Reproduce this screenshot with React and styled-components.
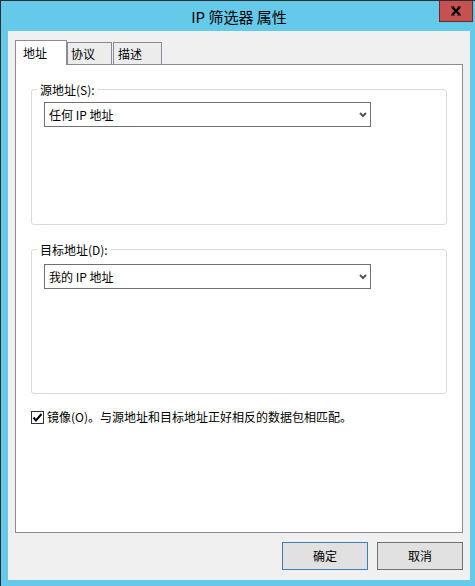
import React from "react";
import styled, { createGlobalStyle } from "styled-components";

const GlobalStyle = createGlobalStyle`
  html, body {
    margin: 0;
    padding: 0;
    overflow: hidden;
    background: #65c9e9;
  }
  body {
    font-family: "Noto Sans CJK SC", "Noto Sans", sans-serif;
    font-size: 12px;
    color: #000;
  }
`;

const Window = styled.div`
  width: 478px;
  height: 588px;
  box-sizing: border-box;
  border: 1px solid #2e2e2e;
  background: #65c9e9;
  display: flex;
  flex-direction: column;
`;

const TitleBar = styled.div`
  position: relative;
  flex: none;
  height: 30px;
  padding-top: 1px;
  box-sizing: border-box;
  display: flex;
  align-items: center;
  justify-content: center;
  font-size: 15px;
  line-height: 18px;
`;

const CloseButton = styled.div`
  position: absolute;
  top: 0;
  right: 4px;
  width: 34px;
  height: 21px;
  box-sizing: border-box;
  background: #c75050;
  border: 1px solid #5c2e2e;
  border-top: none;
  display: flex;
  align-items: center;
  justify-content: center;
`;

const Client = styled.div`
  flex: 1;
  margin: 0 7px 7px;
  padding: 9px 7px 10px;
  background: #f0f0f0;
  display: flex;
  flex-direction: column;
`;

const Tabs = styled.div`
  position: relative;
  z-index: 1;
  display: flex;
  align-items: flex-end;
  margin-bottom: -1px;
`;

const Tab = styled.div`
  box-sizing: border-box;
  width: ${({ $width }) => $width}px;
  height: ${({ $active }) => ($active ? 25 : 22)}px;
  margin-bottom: ${({ $active }) => ($active ? 0 : 1)}px;
  margin-left: ${({ $offset }) => $offset || 0}px;
  padding-left: ${({ $pad }) => $pad}px;
  border: 1px solid #898c95;
  border-bottom: none;
  background: ${({ $active }) => ($active ? "#fff" : "#ececec")};
  display: flex;
  align-items: center;
  line-height: 14px;
`;

const Panel = styled.div`
  flex: 1;
  box-sizing: border-box;
  border: 1px solid #898c95;
  background: #fff;
  padding: 17px 15px 0;
  display: flex;
  flex-direction: column;
`;

const GroupBox = styled.fieldset`
  margin: ${({ $top }) => $top || 0}px 0 0;
  padding: 0;
  min-width: 0;
  border: 1px solid #d5dbe1;
  border-radius: 3px;
`;

const Legend = styled.legend`
  margin-left: 5px;
  padding: 0 3px;
  line-height: 15px;
`;

const GroupBody = styled.div`
  box-sizing: border-box;
  height: ${({ $height }) => $height}px;
  padding: ${({ $top }) => $top}px 12px 0;
`;

const Combo = styled.div`
  box-sizing: border-box;
  width: 327px;
  height: 25px;
  border: 1px solid #707070;
  background: #fff;
  padding: 0 3px 0 4px;
  display: flex;
  align-items: center;
  justify-content: space-between;
  line-height: 14px;
`;

const CheckRow = styled.label`
  display: flex;
  align-items: center;
  gap: 3px;
  margin-top: 16px;
  line-height: 14px;
`;

const CheckBox = styled.span`
  width: 13px;
  height: 13px;
  box-sizing: border-box;
  border: 1px solid #333;
  background: #fff;
  display: flex;
  align-items: center;
  justify-content: center;
`;

const ButtonRow = styled.div`
  display: flex;
  justify-content: flex-end;
  gap: 9px;
  margin-top: 9px;
`;

const Button = styled.button`
  width: 86px;
  height: 28px;
  box-sizing: border-box;
  padding: 0;
  border: 1px solid ${({ $default }) => ($default ? "#3c7fb1" : "#707070")};
  background: #e1e1e1;
  font-family: inherit;
  font-size: 12px;
  line-height: 14px;
  color: #000;
`;

const Chevron = () => (
  <svg width="8" height="6" viewBox="0 0 8 6">
    <polyline points="1,1 4,4 7,1" fill="none" stroke="#555" strokeWidth="2" />
  </svg>
);

const Select = ({ value }) => (
  <Combo>
    <span>{value}</span>
    <Chevron />
  </Combo>
);

const App = () => {
  return (
    <>
      <GlobalStyle />
      <Window>
        <TitleBar>
          IP 筛选器 属性
          <CloseButton>
            <svg width="10" height="10" viewBox="0 0 10 10">
              <path d="M1.5 1.5 L8.5 8.5 M8.5 1.5 L1.5 8.5" stroke="#000" strokeWidth="2.4" />
              <path d="M0 1 H3.5 M6.5 1 H10 M0 9 H3.5 M6.5 9 H10" stroke="#000" strokeWidth="1.2" />
            </svg>
          </CloseButton>
        </TitleBar>
        <Client>
          <Tabs>
            <Tab $active $width={52} $pad={7}>地址</Tab>
            <Tab $width={45} $pad={3}>协议</Tab>
            <Tab $width={49} $offset={1} $pad={4}>描述</Tab>
          </Tabs>
          <Panel>
            <GroupBox>
              <Legend>源地址(S):</Legend>
              <GroupBody $height={127} $top={5}>
                <Select value="任何 IP 地址" />
              </GroupBody>
            </GroupBox>
            <GroupBox $top={17}>
              <Legend>目标地址(D):</Legend>
              <GroupBody $height={136} $top={7}>
                <Select value="我的 IP 地址" />
              </GroupBody>
            </GroupBox>
            <CheckRow>
              <CheckBox>
                <svg width="11" height="11" viewBox="0 0 11 11">
                  <polyline points="1.5,5.5 4,8.5 9.5,2" fill="none" stroke="#000" strokeWidth="2" />
                </svg>
              </CheckBox>
              镜像(O)。与源地址和目标地址正好相反的数据包相匹配。
            </CheckRow>
          </Panel>
          <ButtonRow>
            <Button $default>确定</Button>
            <Button>取消</Button>
          </ButtonRow>
        </Client>
      </Window>
    </>
  );
};

export default App;
